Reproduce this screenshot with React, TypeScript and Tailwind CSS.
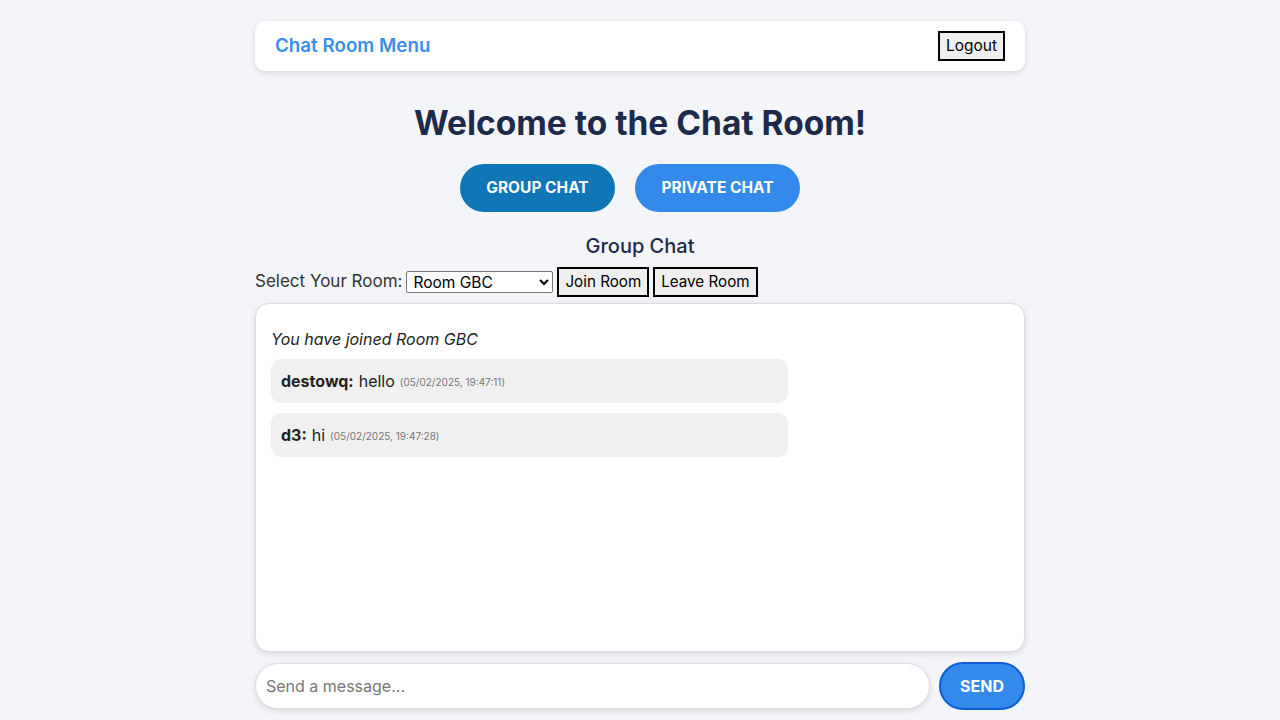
import { useState } from 'react';

const messages = [
  { user: 'destowq', text: 'hello', time: '(05/02/2025, 19:47:11)' },
  { user: 'd3', text: 'hi', time: '(05/02/2025, 19:47:28)' },
];

export default function App() {
  const [room, setRoom] = useState('Room GBC');
  const [draft, setDraft] = useState('');

  return (
    <div className="min-h-screen bg-[#f4f5f9] font-['Inter',sans-serif] text-[#1e2a4a]">
      <div className="mx-auto flex w-[770px] flex-col pt-[21px]">
        <nav className="flex h-[50px] items-center justify-between rounded-[10px] bg-white pl-5 pr-5 shadow-[0_2px_6px_rgba(0,0,0,0.12)]">
          <span className="text-[18.8px] font-semibold text-[#3b8eea]">Chat Room Menu</span>
          <button className="h-[30px] border-2 border-black bg-[#efefef] px-[6px] text-[15.5px] text-black">
            Logout
          </button>
        </nav>

        <h1 className="mt-[28px] text-center text-[33.5px] font-bold leading-[48px] text-[#1e2a4a]">
          Welcome to the Chat Room!
        </h1>

        <div className="mt-[17px] flex justify-center gap-5">
          <button className="h-12 w-[155px] rounded-full bg-[#0f76b8] text-[15.5px] font-bold uppercase text-white">
            Group Chat
          </button>
          <button className="mr-5 h-12 w-[165px] rounded-full bg-[#338aea] text-[15.5px] font-bold uppercase text-white">
            Private Chat
          </button>
        </div>

        <h2 className="mt-[20px] text-center text-[20px] font-medium leading-[28px]">Group Chat</h2>

        <div className="mt-[7px] flex items-center gap-1 text-[17px] text-[#333]">
          <label>Select Your Room:</label>
          <select
            value={room}
            onChange={(e) => setRoom(e.target.value)}
            className="h-[22px] w-[147px] rounded-[2px] border border-[#767676] bg-white px-[2px] text-[15.5px] text-black"
          >
            <option>Room GBC</option>
            <option>Room A</option>
            <option>Room B</option>
          </select>
          <button className="h-[30px] border-2 border-black bg-[#efefef] px-[6px] text-[15.2px] text-black">
            Join Room
          </button>
          <button className="h-[30px] border-2 border-black bg-[#efefef] px-[6px] text-[15.2px] text-black">
            Leave Room
          </button>
        </div>

        <div className="mt-[6px] flex h-[349px] flex-col gap-[10px] rounded-[14px] border border-[#dcdde3] bg-white px-[15px] pt-[25px] shadow-[0_2px_6px_rgba(0,0,0,0.12)]">
          <p className="text-[16px] italic leading-[20px] text-[#222]">You have joined Room GBC</p>
          {messages.map((m) => (
            <div
              key={m.time}
              className="flex h-[44px] w-[517px] items-center rounded-[10px] bg-[#f0f0f0] px-[10px] text-[16px] text-[#222]"
            >
              <b className="font-bold">{m.user}:</b>
              <span className="ml-[5px]">{m.text}</span>
              <span className="ml-[5px] mt-[3px] text-[10px] text-[#777]">{m.time}</span>
            </div>
          ))}
        </div>

        <div className="mt-[10px] flex items-center gap-[9px]">
          <input
            value={draft}
            onChange={(e) => setDraft(e.target.value)}
            placeholder="Send a message..."
            className="h-[46px] flex-1 rounded-full border border-[#dcdde3] bg-white px-[10px] text-[16px] text-[#222] shadow-[0_2px_6px_rgba(0,0,0,0.12)] outline-none placeholder:text-[#777]"
          />
          <button className="h-12 w-[86px] rounded-full border-2 border-[#0b5ed7] bg-[#338aea] text-[16px] font-bold text-white">
            SEND
          </button>
        </div>
      </div>
    </div>
  );
}
